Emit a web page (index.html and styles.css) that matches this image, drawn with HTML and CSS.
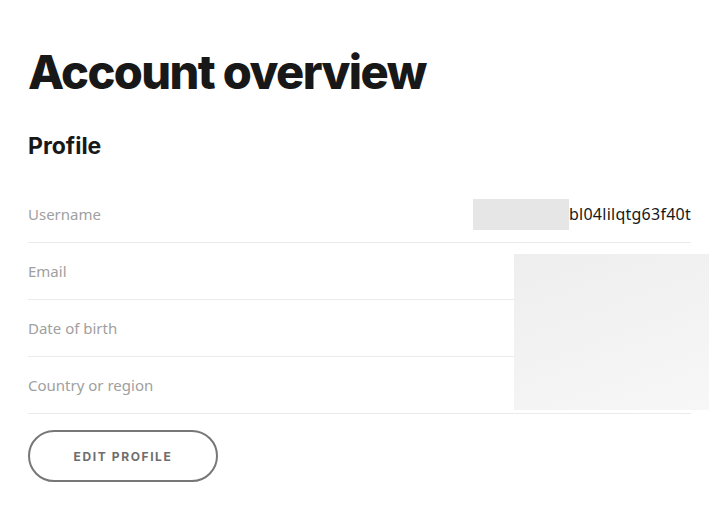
FILE: index.html
```html
<!DOCTYPE html>
<html>
<head>
<meta charset="utf-8">
<link rel="stylesheet" href="styles.css">
</head>
<body>
<main class="page">
  <h1 class="title">Account overview</h1>
  <h2 class="section">Profile</h2>
  <div class="table">
    <div class="row">
      <span class="label">Username</span>
      <span class="value"><span class="mask-small"></span>bl04lilqtg63f40t</span>
    </div>
    <div class="row"><span class="label">Email</span></div>
    <div class="row"><span class="label">Date of birth</span></div>
    <div class="row"><span class="label">Country or region</span></div>
    <div class="mask-big"></div>
  </div>
  <button class="btn">EDIT PROFILE</button>
</main>
</body>
</html>
```
FILE: styles.css
```css
html, body { margin: 0; padding: 0; background: #fff; }
body { font-family: "Noto Sans", "Liberation Sans", sans-serif; color: #181818; }
.page { padding: 40px 27px 0 28px; }
.title { margin: 0; font-size: 47px; font-weight: 800; letter-spacing: -1.6px; line-height: 64px; font-family: "Inter", sans-serif; }
.section { margin: 27px 0 0; font-size: 23px; font-weight: 700; line-height: 30px; font-family: "Inter", sans-serif; }
.table { position: relative; margin-top: 25px; }
.row { display: flex; justify-content: space-between; align-items: center; height: 56px; border-bottom: 1px solid #ebebeb; }
.label { font-size: 15px; color: #a0a0a0; }
.value { display: flex; align-items: center; font-size: 16px; letter-spacing: 0.25px; color: #181818; }
.mask-small { display: inline-block; width: 96px; height: 31px; background: #e6e6e6; }
.mask-big { position: absolute; left: 486px; top: 68px; width: 195px; height: 156px; background: linear-gradient(160deg, #eeeeee, #f7f7f7); }
.btn { margin-top: 16px; width: 190px; height: 52px; border: 2px solid #777; border-radius: 26px; background: #fff; font-family: "Inter", sans-serif; font-size: 12px; font-weight: 700; letter-spacing: 1.6px; color: #6e6e6e; }
```
